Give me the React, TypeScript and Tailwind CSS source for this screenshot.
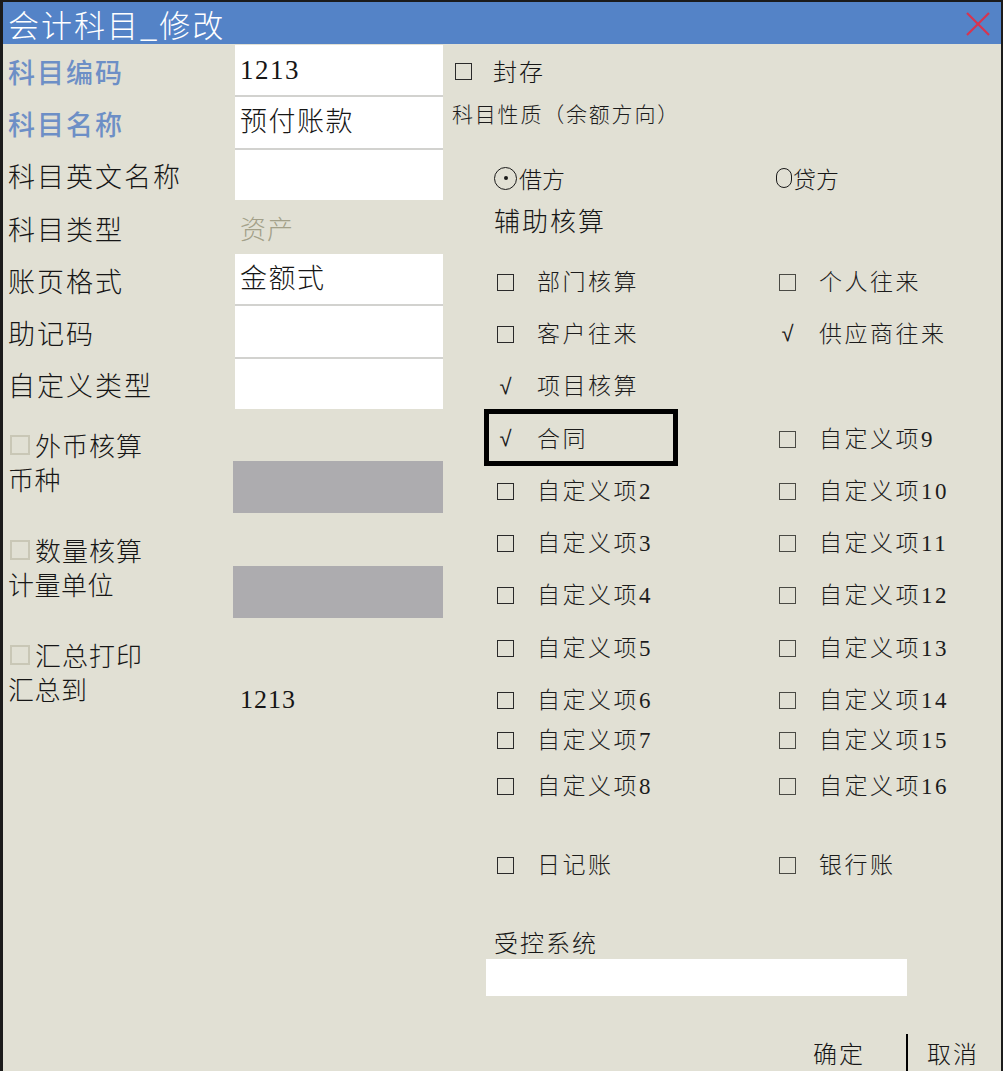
import React from "react";

const CJK = '"Noto Sans CJK SC", "Liberation Serif", serif';
const MIX = '"Liberation Serif", "Noto Sans CJK SC", serif';

function Box({ light }: { light?: boolean }) {
  return (
    <span
      className={`inline-block w-[17px] h-[17px] border-[1.5px] shrink-0 ${light ? "border-[#4a4a44]" : "border-[#2a2a2a]"}`}
    />
  );
}

function Check() {
  return (
    <span className="inline-block w-[17px] text-[22px] leading-none text-[#1a1a1a] shrink-0 text-center" style={{ fontFamily: '"DejaVu Sans", sans-serif' }}>
      √
    </span>
  );
}

function Item({ label, checked, light }: { label: string; checked?: boolean; light?: boolean }) {
  return (
    <div className="flex items-center h-full pl-[3px]">
      {checked ? <Check /> : <Box light={light} />}
      <span className="ml-[23px] text-[23px] tracking-[2.5px] leading-none text-[#1c1c1c] whitespace-nowrap" style={{ fontFamily: MIX }}>
        {label}
      </span>
    </div>
  );
}

function LightBox() {
  return <span className="inline-block w-[20px] h-[20px] border-[2px] border-[#c9c7b6] mr-[5px] shrink-0" />;
}

export default function App() {
  const leftRows: { label: string; blue?: boolean; value?: string; box: boolean; sep?: boolean }[] = [
    { label: "科目编码", blue: true, value: "1213", box: true, sep: true },
    { label: "科目名称", blue: true, value: "预付账款", box: true, sep: true },
    { label: "科目英文名称", value: "", box: true },
    { label: "科目类型", value: "资产", box: false },
    { label: "账页格式", value: "金额式", box: true, sep: true },
    { label: "助记码", value: "", box: true, sep: true },
    { label: "自定义类型", value: "", box: true },
  ];

  const gridRows: [string, boolean, string, boolean][] = [
    ["部门核算", false, "个人往来", false],
    ["客户往来", false, "供应商往来", true],
    ["项目核算", true, "", false],
    ["合同", true, "自定义项9", false],
    ["自定义项2", false, "自定义项10", false],
    ["自定义项3", false, "自定义项11", false],
    ["自定义项4", false, "自定义项12", false],
    ["自定义项5", false, "自定义项13", false],
    ["自定义项6", false, "自定义项14", false],
  ];

  return (
    <div
      className="w-[1003px] h-[1071px] bg-[#e1e0d4] border-l-[3px] border-t-[2px] border-r-[2px] border-[#1b1b1b] overflow-hidden flex flex-col text-[#161616] font-light"
      style={{ fontFamily: CJK }}
    >
      {/* Title bar */}
      <div className="h-[42px] bg-[#5483c7] flex items-center justify-between pl-[5px] pr-[10px] shrink-0">
        <span className="text-white text-[31px] tracking-[2px] leading-none font-light">会计科目_修改</span>
        <svg width="26" height="26" viewBox="0 0 26 26" className="mt-[1px]">
          <line x1="2" y1="2" x2="24" y2="24" stroke="#d8344f" strokeWidth="2.2" />
          <line x1="24" y1="2" x2="2" y2="24" stroke="#d8344f" strokeWidth="2.2" />
        </svg>
      </div>

      <div className="flex flex-1">
        {/* Left column */}
        <div className="w-[440px] shrink-0 flex flex-col pt-[1px]">
          {leftRows.map((r, i) => (
            <div key={i} className="flex h-[52.3px]">
              <div className="w-[232px] pl-[5px] flex items-center">
                <span
                  className={`text-[27px] tracking-[2px] leading-none whitespace-nowrap ${r.blue ? "text-[#6d8fc6] font-medium" : "text-[#161616]"}`}
                >
                  {r.label}
                </span>
              </div>
              {r.box ? (
                <div className={`w-[208px] bg-white flex items-center pl-[5px] ${r.sep ? "border-b-[2px] border-[#d2d2cf]" : "mb-[2px]"}`}>
                  <span className="text-[27px] tracking-[1.5px] leading-none text-[#161616]" style={{ fontFamily: MIX }}>
                    {r.value}
                  </span>
                </div>
              ) : (
                <div className="w-[208px] flex items-center pl-[5px]">
                  <span className="text-[26px] tracking-[1px] leading-none text-[#a3a089]">{r.value}</span>
                </div>
              )}
            </div>
          ))}

          {[
            { a: "外币核算", b: "币种", box: true },
            { a: "数量核算", b: "计量单位", box: true },
            { a: "汇总打印", b: "汇总到", box: false },
          ].map((g, i) => (
            <div key={i} className="flex h-[105px]">
              <div className="w-[230px] pl-[5px] pt-[17px] flex flex-col">
                <div className="h-[34px] flex items-center pl-[2px]">
                  <LightBox />
                  <span className="text-[26px] tracking-[1px] leading-none whitespace-nowrap">{g.a}</span>
                </div>
                <div className="h-[34px] flex items-center">
                  <span className="text-[26px] tracking-[0.5px] leading-none whitespace-nowrap">{g.b}</span>
                </div>
              </div>
              {g.box ? (
                <div className="w-[210px] h-[52px] mt-[50px] bg-[#adacaf]" />
              ) : (
                <div className="pl-[7px] pt-[66px]">
                  <span className="text-[26px] tracking-[1px] leading-none" style={{ fontFamily: MIX }}>
                    1213
                  </span>
                </div>
              )}
            </div>
          ))}
        </div>

        {/* Right column */}
        <div className="flex-1 flex flex-col pl-[9px]">
          <div className="h-[54px] flex items-center pl-[3px]">
            <Box />
            <span className="ml-[21px] text-[24px] tracking-[2px] leading-none">封存</span>
          </div>
          <div className="h-[30px] flex items-center">
            <span className="text-[21px] tracking-[1.8px] leading-none text-[#1c1c1c]">科目性质（余额方向）</span>
          </div>

          <div className="ml-[42px] flex flex-col">
            <div className="h-[40px] mt-[30px] grid grid-cols-[282px_1fr] items-center">
              <div className="flex items-center">
                <span className="w-[23px] h-[23px] rounded-full border-[1.5px] border-[#1a1a1a] flex items-center justify-center shrink-0">
                  <span className="w-[4px] h-[4px] rounded-full bg-[#1a1a1a]" />
                </span>
                <span className="ml-[2px] text-[23px] leading-none">借方</span>
              </div>
              <div className="flex items-center">
                <span className="w-[16px] h-[20px] rounded-full border-[1.5px] border-[#1a1a1a] shrink-0" />
                <span className="ml-[1px] text-[23px] leading-none">贷方</span>
              </div>
            </div>
            <div className="h-[44px] flex items-center">
              <span className="text-[26px] tracking-[2px] leading-none">辅助核算</span>
            </div>

            <div className="mt-[14px] grid grid-cols-[282px_1fr] auto-rows-[52.3px]">
              {gridRows.map((r, i) => (
                <React.Fragment key={i}>
                  <div className="relative">
                    {r[0] === "合同" && (
                      <div className="absolute left-[-10px] top-[-4px] w-[194px] h-[57px] border-[5px] border-black" />
                    )}
                    <Item label={r[0]} checked={r[1]} />
                  </div>
                  <div>{r[2] ? <Item label={r[2]} checked={r[3]} light /> : null}</div>
                </React.Fragment>
              ))}
              <div className="h-[40px] -mt-[6px]">
                <Item label="自定义项7" />
              </div>
              <div className="h-[40px] -mt-[6px]">
                <Item label="自定义项15" light />
              </div>
            </div>
            <div className="grid grid-cols-[282px_1fr] h-[44px] -mt-[14px]">
              <Item label="自定义项8" />
              <Item label="自定义项16" light />
            </div>

            <div className="grid grid-cols-[282px_1fr] h-[44px] mt-[35px]">
              <Item label="日记账" />
              <Item label="银行账" light />
            </div>

            <div className="h-[34px] mt-[37px] flex items-center">
              <span className="text-[24px] tracking-[2px] leading-none">受控系统</span>
            </div>
          </div>
          <div className="ml-[34px] w-[421px] h-[37px] bg-white" />

          <div className="mt-[38px] h-[38px] flex items-center justify-end pr-[22px]">
            <span className="text-[24px] tracking-[2px] leading-none">确定</span>
            <span className="w-[2px] h-[38px] bg-black ml-[41px] mr-[19px] self-start" />
            <span className="text-[24px] tracking-[2px] leading-none">取消</span>
          </div>
        </div>
      </div>
    </div>
  );
}
